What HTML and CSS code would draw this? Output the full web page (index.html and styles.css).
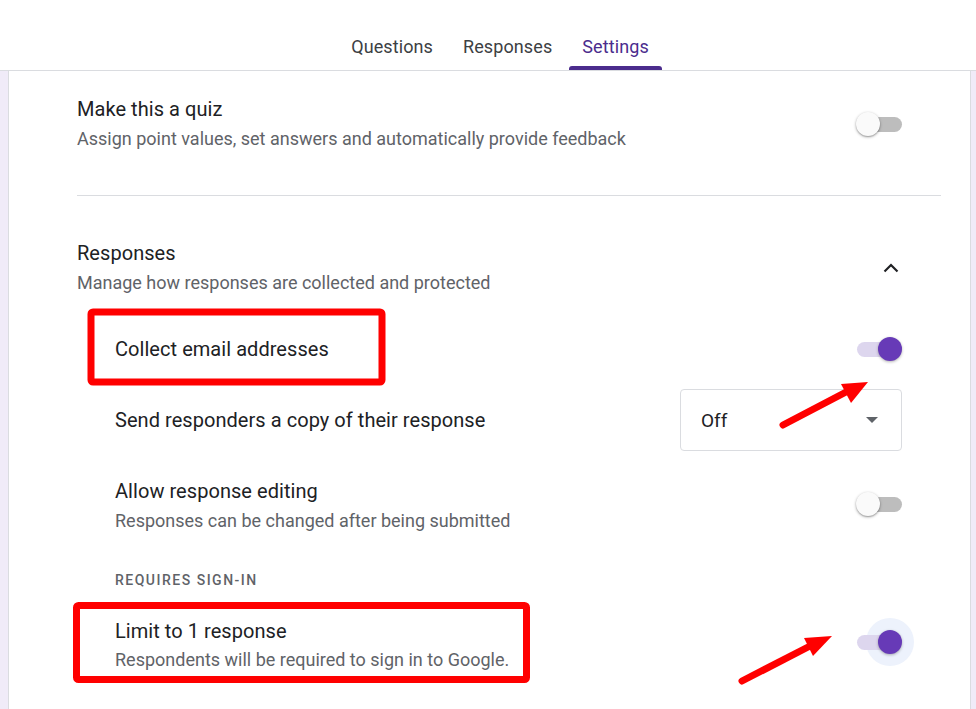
FILE: index.html
```html
<!DOCTYPE html>
<html lang="en">
<head>
<meta charset="utf-8">
<title>Settings</title>
<link rel="stylesheet" href="styles.css">
</head>
<body>
<header class="topbar">
  <nav class="tabs">
    <div class="tab">Questions</div>
    <div class="tab">Responses</div>
    <div class="tab active">Settings</div>
  </nav>
</header>
<main class="card">
  <section class="section quiz">
    <div class="row">
      <div class="text">
        <div class="title">Make this a quiz</div>
        <div class="sub">Assign point values, set answers and automatically provide feedback</div>
      </div>
      <div class="switch"><span class="track"></span><span class="thumb"></span></div>
    </div>
  </section>
  <div class="divider"></div>
  <section class="section responses">
    <div class="row">
      <div class="text">
        <div class="title">Responses</div>
        <div class="sub">Manage how responses are collected and protected</div>
      </div>
      <div class="chev">
        <svg width="24" height="24" viewBox="0 0 24 24"><path d="M5.5 15.5 L12 9 L18.5 15.5" fill="none" stroke="#202124" stroke-width="2.2"/></svg>
      </div>
    </div>
    <div class="items">
      <div class="row item collect">
        <div class="title">Collect email addresses</div>
        <div class="switch on"><span class="track"></span><span class="thumb"></span></div>
      </div>
      <div class="row item send">
        <div class="title">Send responders a copy of their response</div>
        <div class="select">
          <span>Off</span>
          <svg width="12" height="6" viewBox="0 0 12 6"><path d="M0 0 L12 0 L6 6 Z" fill="#5f6368"/></svg>
        </div>
      </div>
      <div class="row item editing">
        <div class="text">
          <div class="title">Allow response editing</div>
          <div class="sub">Responses can be changed after being submitted</div>
        </div>
        <div class="switch"><span class="track"></span><span class="thumb"></span></div>
      </div>
      <div class="caption">REQUIRES SIGN-IN</div>
      <div class="row item limit">
        <div class="text">
          <div class="title">Limit to 1 response</div>
          <div class="sub tight">Respondents will be required to sign in to Google.</div>
        </div>
        <div class="switch on focus"><span class="halo"></span><span class="track"></span><span class="thumb"></span></div>
      </div>
    </div>
  </section>
</main>
<svg class="annot" width="976" height="709" viewBox="0 0 976 709">
  <rect x="91" y="312" width="291" height="70" rx="2" fill="none" stroke="#ff0000" stroke-width="7"/>
  <rect x="76.5" y="605.5" width="450" height="74" rx="2" fill="none" stroke="#ff0000" stroke-width="7"/>
  <line x1="783" y1="425" x2="848" y2="391" stroke="#ff0000" stroke-width="7" stroke-linecap="round"/>
  <polygon points="841,384 868,382 851,403" fill="#ff0000"/>
  <line x1="742" y1="681" x2="812" y2="645" stroke="#ff0000" stroke-width="7" stroke-linecap="round"/>
  <polygon points="804,638 832,636 813,656" fill="#ff0000"/>
</svg>
</body>
</html>
```
FILE: styles.css
```css
* { box-sizing: border-box; }
html, body { margin: 0; padding: 0; }
body {
  background: #f0ebf8;
  font-family: Roboto, "Noto Sans", Arial, sans-serif;
  color: #202124;
  width: 976px;
  height: 709px;
  overflow: hidden;
  position: relative;
}
.topbar {
  background: #fff;
  height: 71px;
  border-bottom: 1px solid #dadce0;
  display: flex;
  justify-content: center;
  align-items: flex-end;
  padding-left: 24px;
}
.tabs { display: flex; gap: 4px; }
.tab {
  font-size: 18px;
  color: #3c4043;
  padding: 0 13px;
  height: 70px;
  display: flex;
  align-items: center;
  padding-top: 22px;
  position: relative;
  letter-spacing: 0.1px;
}
.tab.active { color: #4b2c8d; }
.tab.active::after {
  content: "";
  position: absolute;
  left: 0; right: 0; bottom: 0;
  height: 4px;
  background: #4b2c8d;
  border-radius: 3px 3px 0 0;
}
.card {
  background: #fff;
  margin: 0 5px 0 8px;
  border-left: 1px solid #dadce0;
  border-right: 1px solid #dadce0;
  height: 638px;
  padding: 0 29px 0 68px;
}
.row { display: flex; align-items: center; justify-content: space-between; padding-right: 39px; }
.title { font-size: 20px; line-height: 24px; color: #202124; letter-spacing: 0.05px; }
.sub { font-size: 18px; line-height: 24px; color: #5f6368; margin-top: 6px; }
.sub.tight { margin-top: 5px; }
.quiz { padding-top: 26px; padding-bottom: 44px; }
.divider { height: 1px; background: #dadce0; }
.responses { padding-top: 45px; }
.responses > .row .chev { width: 24px; height: 24px; margin-right: -1px; }
.items { padding-left: 38px; }
.item.collect { margin-top: 30px; height: 48px; }
.item.send { margin-top: 16px; height: 62px; }
.item.editing { margin-top: 28px; }
.item.editing .switch { margin-top: -4px; }
.caption {
  margin-top: 37px;
  font-size: 14px;
  line-height: 20px;
  font-weight: 500;
  letter-spacing: 1.5px;
  color: #5f6368;
}
.item.limit { margin-top: 29px; }
.item.limit .switch { margin-top: -8px; }
.select {
  width: 222px;
  height: 62px;
  border: 1px solid #dadce0;
  border-radius: 4px;
  display: flex;
  align-items: center;
  justify-content: space-between;
  padding: 0 23px 0 20px;
  font-size: 19px;
  color: #202124;
}
.switch { position: relative; width: 46px; height: 24px; flex: none; }
.switch .track {
  position: absolute; left: 1px; right: 0; top: 5px; height: 15px;
  border-radius: 8px; background: #bdbdbd;
}
.switch .thumb {
  position: absolute; left: 0; top: 0; width: 24px; height: 24px;
  border-radius: 50%; background: #fafafa;
  box-shadow: 0 1px 3px rgba(0,0,0,0.35), 0 1px 1px rgba(0,0,0,0.14);
}
.switch.on .track { background: #ddd6ee; }
.switch.on .thumb { left: 22px; background: #673ab7; box-shadow: 0 1px 3px rgba(0,0,0,0.3); }
.switch .halo {
  position: absolute; left: 10px; top: -12px; width: 48px; height: 48px;
  border-radius: 50%; background: #edf2fc;
}
.annot { position: absolute; left: 0; top: 0; pointer-events: none; }
```
